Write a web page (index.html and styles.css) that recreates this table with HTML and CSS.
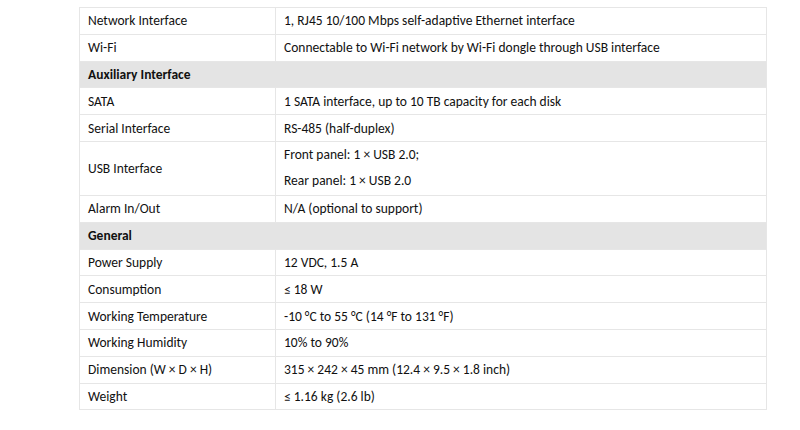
FILE: index.html
```html
<!DOCTYPE html>
<html>
<head>
<meta charset="utf-8">
<link rel="stylesheet" href="styles.css">
</head>
<body>
<table class="spec">
  <tr><td class="k">Network Interface</td><td>1, RJ45 10/100 Mbps self-adaptive Ethernet interface</td></tr>
  <tr><td class="k">Wi-Fi</td><td>Connectable to Wi-Fi network by Wi-Fi dongle through USB interface</td></tr>
  <tr class="sec"><td colspan="2">Auxiliary Interface</td></tr>
  <tr><td class="k">SATA</td><td>1 SATA interface, up to 10 TB capacity for each disk</td></tr>
  <tr><td class="k">Serial Interface</td><td>RS-485 (half-duplex)</td></tr>
  <tr class="tall"><td class="k">USB Interface</td><td><div class="line">Front panel: 1 × USB 2.0;</div><div class="line">Rear panel: 1 × USB 2.0</div></td></tr>
  <tr><td class="k">Alarm In/Out</td><td>N/A (optional to support)</td></tr>
  <tr class="sec"><td colspan="2">General</td></tr>
  <tr><td class="k">Power Supply</td><td>12 VDC, 1.5 A</td></tr>
  <tr><td class="k">Consumption</td><td>≤ 18 W</td></tr>
  <tr><td class="k">Working Temperature</td><td>-10 °C to 55 °C (14 °F to 131 °F)</td></tr>
  <tr><td class="k">Working Humidity</td><td>10% to 90%</td></tr>
  <tr><td class="k">Dimension (W × D × H)</td><td>315 × 242 × 45 mm (12.4 × 9.5 × 1.8 inch)</td></tr>
  <tr><td class="k">Weight</td><td>≤ 1.16 kg (2.6 lb)</td></tr>
</table>
</body>
</html>
```
FILE: styles.css
```css
html, body {
  margin: 0;
  padding: 0;
  background: #ffffff;
}
body {
  font-family: Carlito, Calibri, Lato, "Open Sans", sans-serif;
  font-size: 13.5px;
  color: #111111;
}
.spec {
  border-collapse: collapse;
  margin: 7px 0 0 79px;
  width: 688px;
  table-layout: fixed;
}
.spec td {
  border: 1px solid #e6e6e6;
  height: 26.8px;
  padding: 0 8px;
  box-sizing: border-box;
  vertical-align: middle;
  white-space: nowrap;
}
.spec td.k {
  width: 196px;
}
.spec tr.sec td {
  background: #e4e4e4;
  font-weight: bold;
}
.spec tr.tall td {
  height: 53px;
}
.line {
  height: 26.5px;
  line-height: 26.5px;
}
```
